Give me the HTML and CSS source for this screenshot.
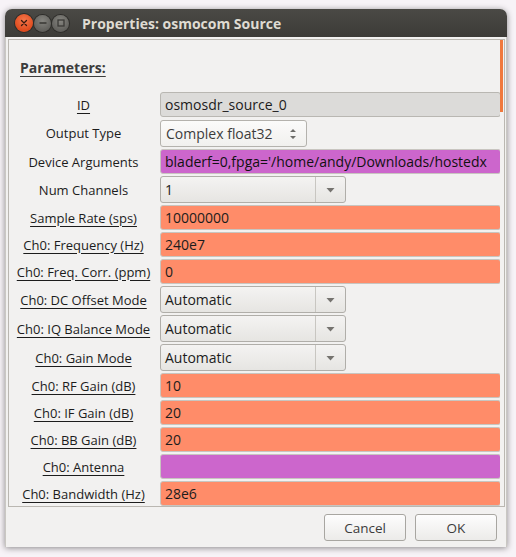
FILE: index.html
```html
<!DOCTYPE html>
<html>
<head>
<meta charset="utf-8">
<link rel="stylesheet" href="styles.css">
</head>
<body>
<div class="window">
  <div class="titlebar">
    <div class="wbtns">
      <span class="wb close"><svg width="10" height="10" viewBox="0 0 10 10"><path d="M2.5 2.5 L7.5 7.5 M7.5 2.5 L2.5 7.5" stroke="#3a1a10" stroke-width="1.3" stroke-linecap="round"/></svg></span>
      <span class="wb min"><svg width="10" height="10" viewBox="0 0 10 10"><path d="M1.5 5 H8.5" stroke="#3b3a37" stroke-width="1.6"/></svg></span>
      <span class="wb max"><svg width="10" height="10" viewBox="0 0 10 10"><rect x="2" y="2" width="6" height="6" fill="none" stroke="#3b3a37" stroke-width="1.3"/></svg></span>
    </div>
    <div class="title">Properties: osmocom Source</div>
  </div>
  <div class="wbody">
    <div class="frame">
      <div class="scroll">
        <div class="heading">Parameters:</div>
        <div class="grid">
          <div class="lbl u">ID</div>
          <div class="field entry grey">osmosdr_source_0</div>

          <div class="lbl">Output Type</div>
          <div class="field spin">Complex float32
            <svg class="updown" width="8" height="14" viewBox="0 0 8 14"><path d="M1 5 L4 2 L7 5 Z M1 9 L4 12 L7 9 Z" fill="#6d6c69"/></svg>
          </div>

          <div class="lbl">Device Arguments</div>
          <div class="field entry magenta">bladerf=0,fpga='/home/andy/Downloads/hostedx</div>

          <div class="lbl">Num Channels</div>
          <div class="field combo"><span class="ctext">1</span><span class="carrow"><svg width="9" height="6" viewBox="0 0 9 6"><path d="M0.5 1 L8.5 1 L4.5 5.5 Z" fill="#75736f"/></svg></span></div>

          <div class="lbl u">Sample Rate (sps)</div>
          <div class="field entry orange">10000000</div>

          <div class="lbl u">Ch0: Frequency (Hz)</div>
          <div class="field entry orange">240e7</div>

          <div class="lbl u">Ch0: Freq. Corr. (ppm)</div>
          <div class="field entry orange">0</div>

          <div class="lbl u">Ch0: DC Offset Mode</div>
          <div class="field combo"><span class="ctext">Automatic</span><span class="carrow"><svg width="9" height="6" viewBox="0 0 9 6"><path d="M0.5 1 L8.5 1 L4.5 5.5 Z" fill="#75736f"/></svg></span></div>

          <div class="lbl u">Ch0: IQ Balance Mode</div>
          <div class="field combo"><span class="ctext">Automatic</span><span class="carrow"><svg width="9" height="6" viewBox="0 0 9 6"><path d="M0.5 1 L8.5 1 L4.5 5.5 Z" fill="#75736f"/></svg></span></div>

          <div class="lbl u">Ch0: Gain Mode</div>
          <div class="field combo"><span class="ctext">Automatic</span><span class="carrow"><svg width="9" height="6" viewBox="0 0 9 6"><path d="M0.5 1 L8.5 1 L4.5 5.5 Z" fill="#75736f"/></svg></span></div>

          <div class="lbl u">Ch0: RF Gain (dB)</div>
          <div class="field entry orange">10</div>

          <div class="lbl u">Ch0: IF Gain (dB)</div>
          <div class="field entry orange">20</div>

          <div class="lbl u">Ch0: BB Gain (dB)</div>
          <div class="field entry orange">20</div>

          <div class="lbl u">Ch0: Antenna</div>
          <div class="field entry magenta"></div>

          <div class="lbl u">Ch0: Bandwidth (Hz)</div>
          <div class="field entry orange">28e6</div>
        </div>
      </div>
      <div class="vscroll"><div class="thumb"></div></div>
    </div>
    <div class="buttons">
      <button class="btn">Cancel</button>
      <button class="btn">OK</button>
    </div>
  </div>
</div>
</body>
</html>
```
FILE: styles.css
```css
html, body {
  margin: 0;
  padding: 0;
}
body {
  background: #f7f3f7;
  width: 516px;
  height: 557px;
  overflow: hidden;
  font-family: "Open Sans", "DejaVu Sans", sans-serif;
  color: #1c1c1c;
}
.window {
  margin: 9px 0 0 5px;
  width: 502px;
  height: 538px;
  display: flex;
  flex-direction: column;
  border-radius: 7px 7px 0 0;
  box-shadow: 0 1px 6px rgba(0, 0, 0, 0.45);
  background: #f2f1f0;
}
.titlebar {
  height: 28px;
  flex: none;
  display: flex;
  align-items: center;
  background: linear-gradient(#4a4945, #3c3b37);
  border-radius: 7px 7px 0 0;
}
.wbtns {
  display: flex;
  gap: 1px;
  margin-left: 10px;
  align-items: center;
}
.wb {
  width: 17px;
  height: 17px;
  border-radius: 50%;
  display: flex;
  align-items: center;
  justify-content: center;
}
.wb.close {
  width: 18px;
  height: 18px;
  background: radial-gradient(circle at 50% 35%, #f6774b, #df4b1e 70%);
  box-shadow: 0 0 0 1px #2e2d2a;
}
.wb.min, .wb.max {
  background: radial-gradient(circle at 50% 35%, #85847f, #5f5e5a 75%);
  box-shadow: 0 0 0 1px #2e2d2a;
}
.title {
  margin-left: 13px;
  font-weight: bold;
  font-size: 14px;
  color: #dfdbd2;
}
.wbody {
  flex: 1;
  display: flex;
  flex-direction: column;
  border-left: 1px solid #c9c7c2;
  border-right: 1px solid #c9c7c2;
}
.frame {
  margin: 2px 0 0 2px;
  width: 496px;
  height: 466px;
  border: 1px solid #bab7b1;
  border-right: none;
  display: flex;
  overflow: hidden;
}
.scroll {
  flex: 1;
  overflow: hidden;
}
.vscroll {
  width: 4px;
  flex: none;
  border-right: 1px solid #bab7b1;
  background: #f2f1f0;
}
.thumb {
  width: 3px;
  height: 72px;
  background: #f0783c;
}
.heading {
  margin: 20px 0 0 11px;
  font-weight: bold;
  font-size: 14px;
  color: #3c3c3c;
  text-decoration: underline;
  text-underline-offset: 3px;
  line-height: 16px;
}
.grid {
  display: grid;
  grid-template-columns: 143px 341px;
  column-gap: 5px;
  row-gap: 2px;
  margin: 16px 0 0 3px;
}
.lbl {
  font-size: 13px;
  text-align: center;
  align-self: center;
  color: #1c1c1c;
  white-space: nowrap;
}
.lbl.u {
  text-decoration: underline;
  text-underline-offset: 3px;
}
.field {
  box-sizing: border-box;
  font-size: 14px;
  white-space: nowrap;
  overflow: hidden;
  display: flex;
  align-items: center;
}
.entry {
  height: 25px;
  padding-left: 4px;
  border: 1px solid #c8c5c0;
  border-radius: 3px;
}
.orange {
  background: #ff8c69;
}
.magenta {
  background: #cc66cc;
  color: #111;
}
.grey {
  background: #dcdbd9;
  border-color: #b9b7b2;
}
.spin {
  height: 27px;
  width: 147px;
  margin-top: 1px;
  padding-left: 5px;
  border: 1px solid #b4b2ad;
  border-radius: 3px;
  background: linear-gradient(#fbfbfa, #f1f0ee);
  color: #3c3c3c;
  justify-content: space-between;
  padding-right: 9px;
}
.combo {
  height: 27px;
  width: 186px;
  border: 1px solid #b0aea9;
  border-radius: 3px;
  background: linear-gradient(#f4f3f2, #e6e5e2);
}
.ctext {
  flex: 1;
  padding-left: 4px;
}
.carrow {
  width: 29px;
  height: 100%;
  border-left: 1px solid #c8c6c1;
  display: flex;
  align-items: center;
  justify-content: center;
}
.buttons {
  display: flex;
  justify-content: flex-end;
  gap: 9px;
  margin: 7px 9px 0 0;
}
.btn {
  width: 82px;
  height: 27px;
  border: 1px solid #a8a6a1;
  border-radius: 3px;
  background: linear-gradient(#fdfdfd, #ecebe9);
  font-family: "Open Sans", "DejaVu Sans", sans-serif;
  font-size: 13.5px;
  color: #3c3c3c;
  padding: 0;
}
```
